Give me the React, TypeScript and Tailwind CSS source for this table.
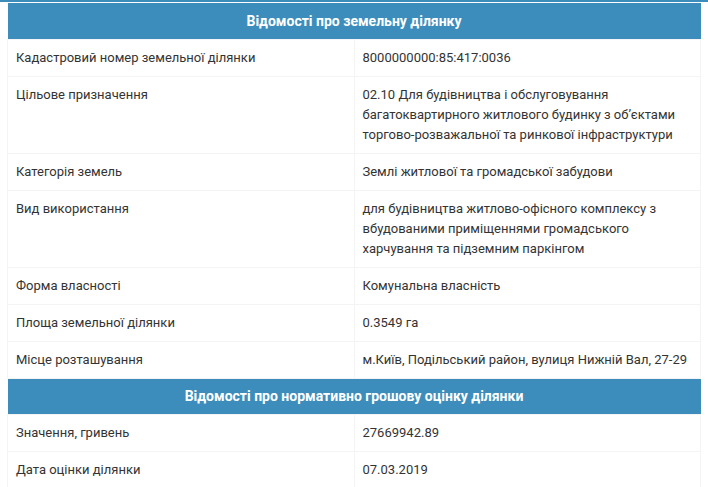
const land = [
  { label: "Кадастровий номер земельної ділянки", value: "8000000000:85:417:0036" },
  {
    label: "Цільове призначення",
    value:
      "02.10 Для будівництва і обслуговування багатоквартирного житлового будинку з об’єктами торгово-розважальної та ринкової інфраструктури",
  },
  { label: "Категорія земель", value: "Землі житлової та громадської забудови" },
  {
    label: "Вид використання",
    value:
      "для будівництва житлово-офісного комплексу з вбудованими приміщеннями громадського харчування та підземним паркінгом",
  },
  { label: "Форма власності", value: "Комунальна власність" },
  { label: "Площа земельної ділянки", value: "0.3549 га" },
  { label: "Місце розташування", value: "м.Київ, Подільський район, вулиця Нижній Вал, 27-29" },
];

const valuation = [
  { label: "Значення, гривень", value: "27669942.89" },
  { label: "Дата оцінки ділянки", value: "07.03.2019" },
];

function Header({ title }: { title: string }) {
  return (
    <tr>
      <th colSpan={2} className="bg-[#3c8dbc] text-white font-bold text-center h-[36px] px-2 text-[14px]">
        {title}
      </th>
    </tr>
  );
}

function Row({ label, value }: { label: string; value: string }) {
  return (
    <tr>
      <td className="w-1/2 border border-[#f4f4f4] px-2 py-2 align-top">{label}</td>
      <td className="w-1/2 border border-[#f4f4f4] pl-2 pr-1 py-2 align-top">{value}</td>
    </tr>
  );
}

export default function App() {
  return (
    <div className="min-h-screen bg-white border-t-2 border-[#3c8dbc] px-[7px] pt-px font-['Roboto',sans-serif] text-[13px] leading-5 text-[#333]">
      <table className="w-full border-collapse table-fixed">
        <tbody>
          <Header title="Відомості про земельну ділянку" />
          {land.map((r) => (
            <Row key={r.label} {...r} />
          ))}
          <Header title="Відомості про нормативно грошову оцінку ділянки" />
          {valuation.map((r) => (
            <Row key={r.label} {...r} />
          ))}
        </tbody>
      </table>
    </div>
  );
}
